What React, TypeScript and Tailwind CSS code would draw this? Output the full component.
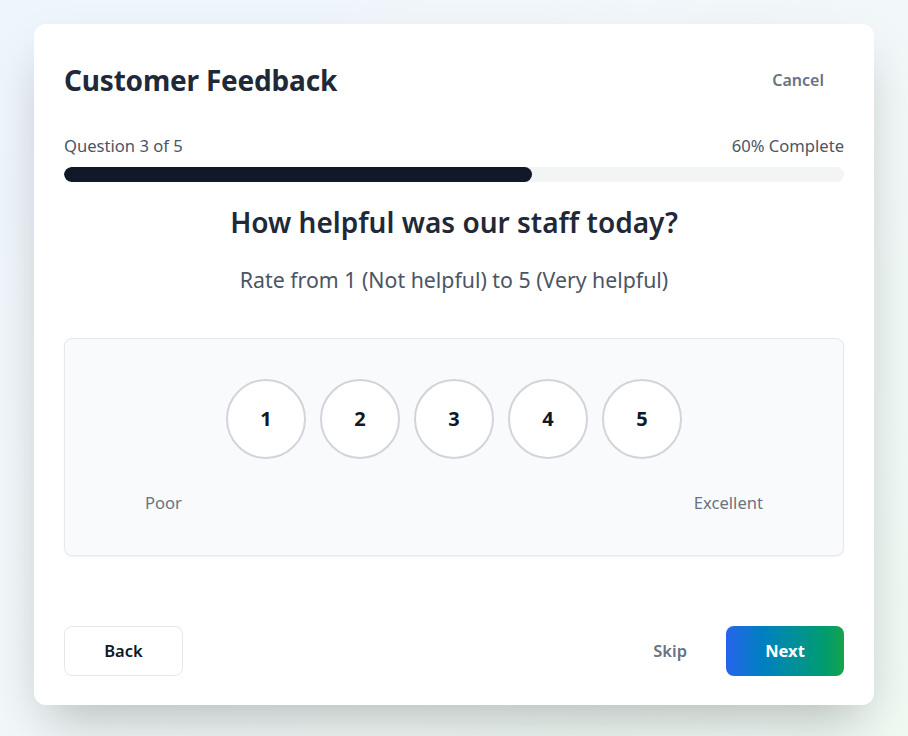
import React from "react";

export default function App() {
  const font = { fontFamily: '"Noto Sans", "Open Sans", sans-serif' };
  return (
    <div
      className="w-[908px] h-[736px] bg-gradient-to-br from-[#eef5fc] via-[#f2f8f9] to-[#effaf3] pt-6 px-[34px]"
      style={font}
    >
      <div className="w-[840px] h-[681px] bg-white rounded-xl shadow-[0_25px_50px_-12px_rgba(0,0,0,0.25)] px-[30px] pt-[30px] flex flex-col">
        <div className="flex items-center justify-between h-[52px]">
          <h1 className="text-[28px] font-bold text-[#1f2937] tracking-[-0.2px]">Customer Feedback</h1>
          <button className="text-[16px] font-semibold text-[#6b7280] px-5 py-2">Cancel</button>
        </div>
        <div className="mt-[28px] flex justify-between text-[16.6px] text-[#4b5563] leading-6">
          <span>Question 3 of 5</span>
          <span>60% Complete</span>
        </div>
        <div className="mt-[9px] h-[15px] w-full rounded-full bg-[#f3f4f6] overflow-hidden">
          <div className="h-full w-[60%] rounded-full bg-[#111827]" />
        </div>
        <h2 className="mt-[22px] text-center text-[28px] font-semibold text-[#1f2937] leading-9">
          How helpful was our staff today?
        </h2>
        <p className="mt-[26px] text-center text-[21.3px] text-[#4b5563] leading-7">
          Rate from 1 (Not helpful) to 5 (Very helpful)
        </p>
        <div className="mt-[44px] rounded-lg border border-[#e5e7eb] bg-[#f9fafb] px-20 pt-10 pb-10 shadow-[0_1px_2px_rgba(0,0,0,0.05)]">
          <div className="flex justify-center gap-[14px]">
            {[1, 2, 3, 4, 5].map((n) => (
              <button
                key={n}
                className="w-20 h-20 rounded-full border-2 border-[#d1d5db] bg-white text-[20px] font-bold text-[#111827] flex items-center justify-center"
              >
                {n}
              </button>
            ))}
          </div>
          <div className="mt-[32px] flex justify-between text-[16.6px] text-[#6b7280] leading-6">
            <span>Poor</span>
            <span>Excellent</span>
          </div>
        </div>
        <div className="mt-auto mb-[29px] flex items-center justify-between">
          <button className="w-[119px] h-[50px] rounded-lg border border-[#e5e7eb] bg-white text-[16.5px] font-semibold text-[#111827]">
            Back
          </button>
          <div className="flex items-center gap-[5px]">
            <button className="px-[34px] h-[50px] text-[16.5px] font-semibold text-[#6b7280]">Skip</button>
            <button className="w-[118px] h-[50px] rounded-lg bg-gradient-to-r from-[#2563eb] to-[#16a34a] text-[16.5px] font-bold text-white">
              Next
            </button>
          </div>
        </div>
      </div>
    </div>
  );
}
